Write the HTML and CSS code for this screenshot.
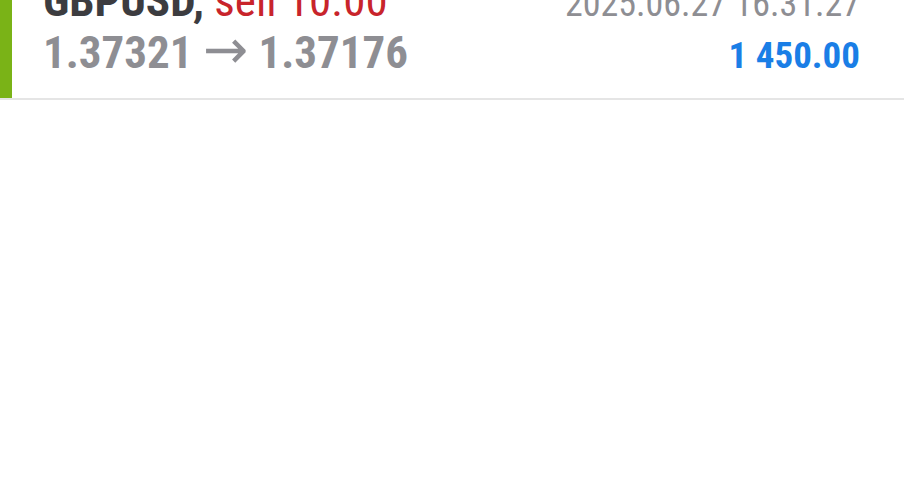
FILE: index.html
```html
<!DOCTYPE html>
<html lang="en">
<head>
    <meta charset="UTF-8">
    <meta name="viewport" content="width=device-width, initial-scale=1.0">
    <title>History</title>
    <link rel="stylesheet" href="styles.css">
</head>
<body>
    <div class="deal">
      <div class="deal-inner">
        <div class="deal-left">
          <div class="deal-title"><span class="symbol">GBPUSD,</span> <span class="sell">sell 10.00</span></div>
          <div class="deal-prices">1.37321 <span class="arrow">&rarr;</span> 1.37176</div>
        </div>
        <div class="deal-right">
          <div class="deal-time">2025.06.27 16.31.27</div>
          <div class="deal-profit">1 450.00</div>
        </div>
      </div>
    </div>
</body>
</html>
```

FILE: styles.css
```css
body{
    margin:0;
    background:white;
    font-family:Roboto, "Noto Sans", sans-serif;
    font-stretch:condensed;
}
.deal{
    margin-top:-25px;
    border-bottom:2px solid #e5e5e5;
}
.deal-inner{
    display:flex;
    justify-content:space-between;
    border-left:12px solid #7ab317;
    padding-left:31px;
    padding-right:44px;
    height:123px;
}
.deal-left{
    font-size:45px;
    line-height:51px;
    font-weight:bold;
}
.symbol{
    color:#3c3c40;
}
.sell{
    color:#c8242b;
    font-weight:normal;
}
.deal-prices{
    color:#8e8e93;
    padding-top:1px;
}
.arrow{
    font-family:"DejaVu Sans", sans-serif;
    font-stretch:normal;
    font-weight:normal;
    font-size:54px;
    line-height:0;
}
.deal-right{
    text-align:right;
}
.deal-time{
    font-size:36px;
    line-height:51px;
    color:#8e8e93;
    margin-top:4px;
}
.deal-profit{
    font-size:37px;
    line-height:51px;
    font-weight:bold;
    color:#1a7ee6;
}
```
